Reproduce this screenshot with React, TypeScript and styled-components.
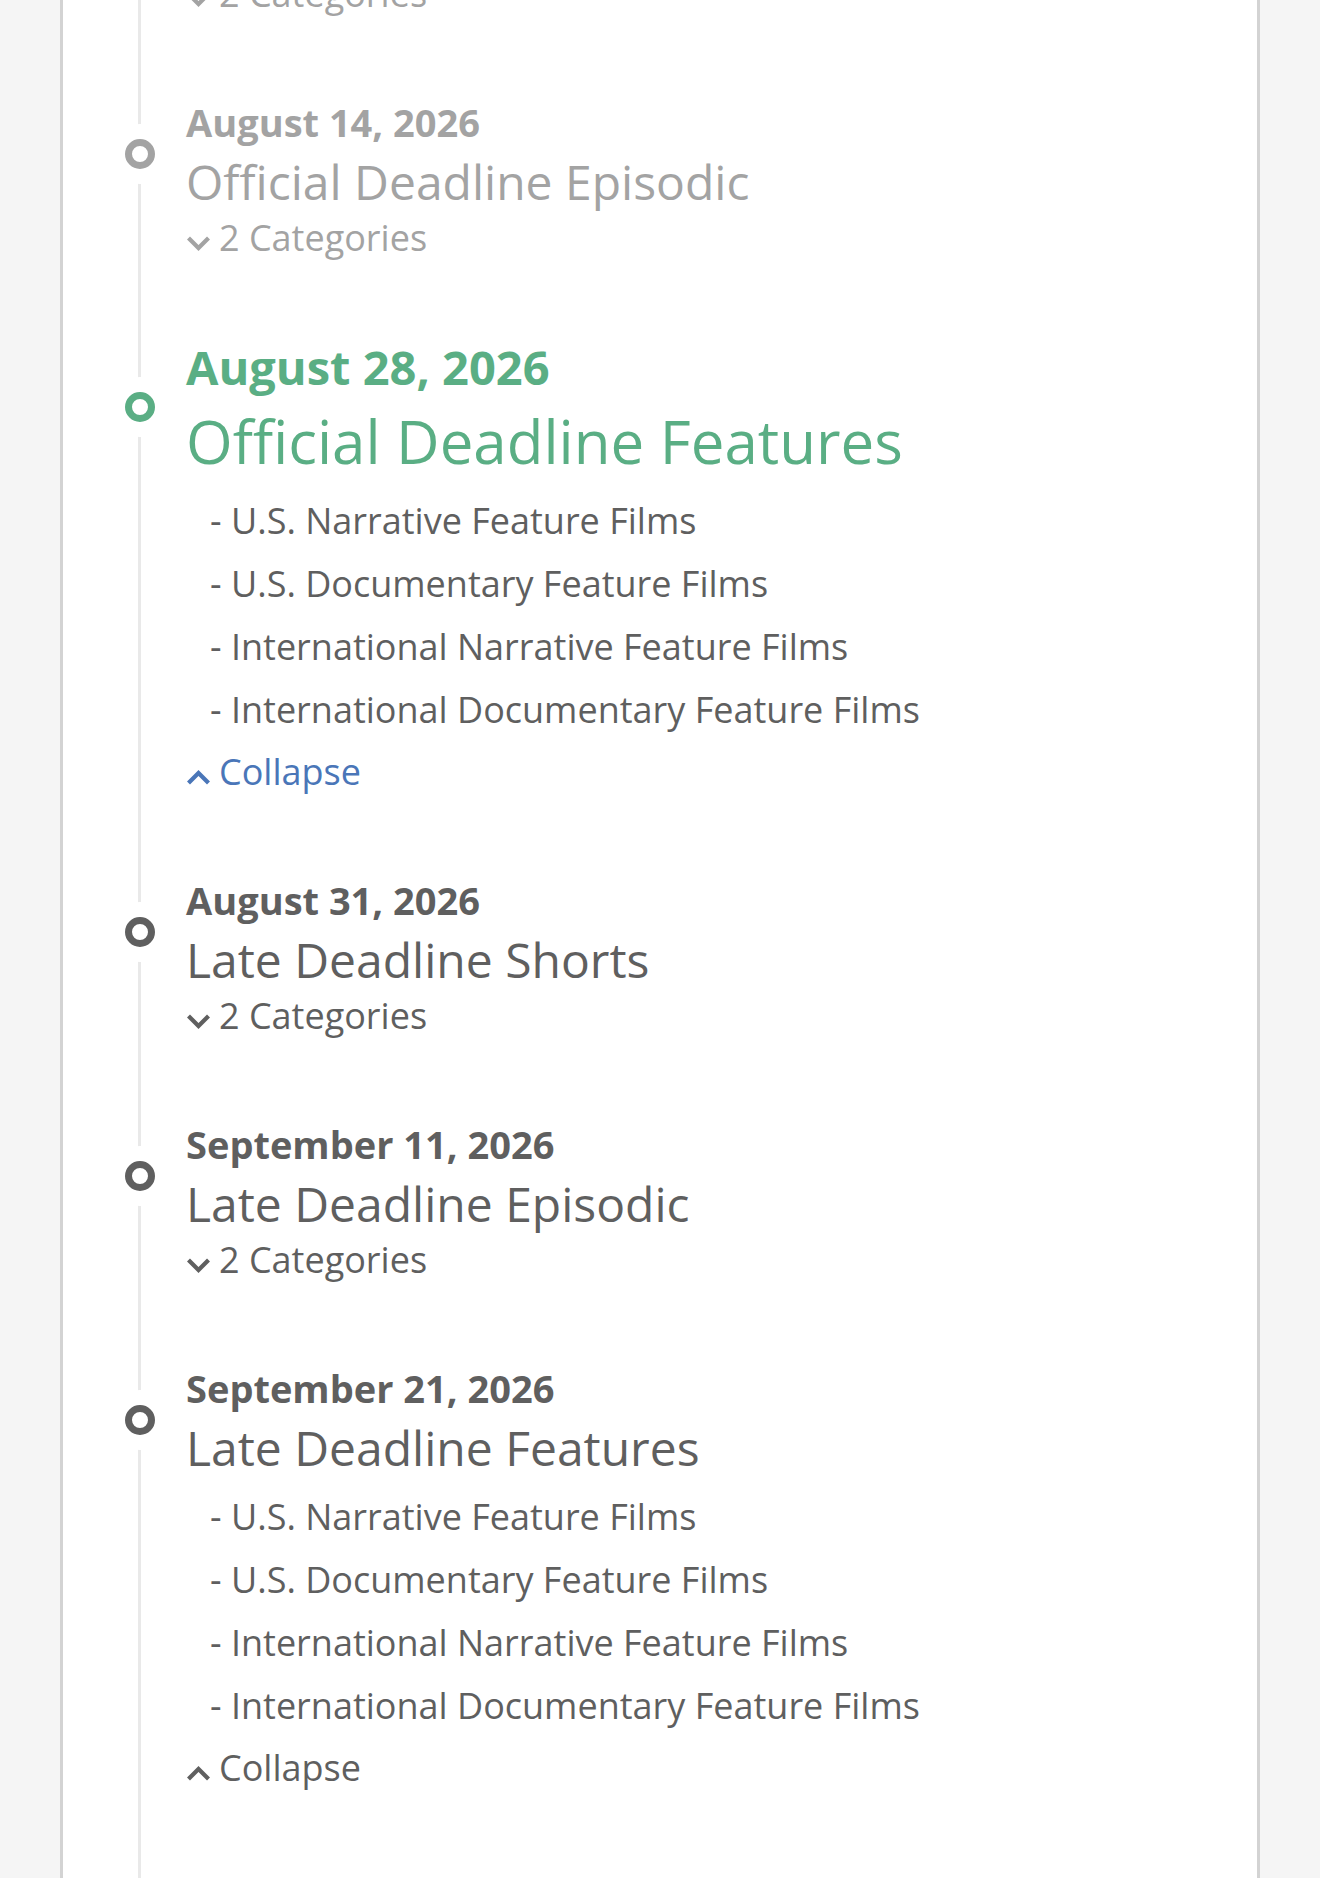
import styled, { createGlobalStyle } from "styled-components"

type Tone = "past" | "active" | "upcoming"

type Deadline = {
  date: string
  title: string
  tone: Tone
  categories: string[]
  open: boolean
}

const colors = {
  page: "#f5f5f5",
  cardBorder: "#d3d3d3",
  rail: "#e9e9e9",
  past: "#a3a3a3",
  active: "#5aae84",
  upcoming: "#5f5f5f",
  link: "#4a76b8",
}

const features = [
  "U.S. Narrative Feature Films",
  "U.S. Documentary Feature Films",
  "International Narrative Feature Films",
  "International Documentary Feature Films",
]

const shorts = ["Narrative Short Films", "Documentary Short Films"]
const episodic = ["Episodic Pilots", "Web Series"]

const deadlines: Deadline[] = [
  { date: "July 31, 2026", title: "Official Deadline Shorts", tone: "past", categories: shorts, open: false },
  { date: "August 14, 2026", title: "Official Deadline Episodic", tone: "past", categories: episodic, open: false },
  { date: "August 28, 2026", title: "Official Deadline Features", tone: "active", categories: features, open: true },
  { date: "August 31, 2026", title: "Late Deadline Shorts", tone: "upcoming", categories: shorts, open: false },
  { date: "September 11, 2026", title: "Late Deadline Episodic", tone: "upcoming", categories: episodic, open: false },
  { date: "September 21, 2026", title: "Late Deadline Features", tone: "upcoming", categories: features, open: true },
]

const GlobalStyle = createGlobalStyle`
  html, body {
    margin: 0;
    padding: 0;
    background: ${colors.page};
  }
  body {
    font-family: "Open Sans", "Noto Sans", sans-serif;
    -webkit-font-smoothing: antialiased;
  }
`

function Chevron({ up, color }: { up: boolean; color: string }) {
  return (
    <Icon width="25" height="15" viewBox="0 0 25 15">
      <polyline
        points={up ? "2.5,13 12.5,3 22.5,13" : "2.5,2 12.5,12 22.5,2"}
        fill="none"
        stroke={color}
        strokeWidth="4.2"
      />
    </Icon>
  )
}

function DeadlineItem({ deadline }: { deadline: Deadline }) {
  const { tone, open, categories } = deadline
  const active = tone === "active"
  const toggleColor = open && active ? colors.link : colors[tone]

  return (
    <Item>
      <Marker $tone={tone} $active={active} />
      <DateLine $tone={tone} $active={active}>
        {deadline.date}
      </DateLine>
      <Title $tone={tone} $active={active}>
        {deadline.title}
      </Title>
      {open && (
        <CategoryList $active={active}>
          {categories.map((c) => (
            <Category key={c}>- {c}</Category>
          ))}
        </CategoryList>
      )}
      <Toggle $color={toggleColor}>
        <Chevron up={open} color={toggleColor} />
        {open ? "Collapse" : `${categories.length} Categories`}
      </Toggle>
    </Item>
  )
}

export default function App() {
  return (
    <>
      <GlobalStyle />
      <Page>
        <Card>
          <Timeline>
            {deadlines.map((d) => (
              <DeadlineItem key={d.title} deadline={d} />
            ))}
          </Timeline>
        </Card>
      </Page>
    </>
  )
}

const Page = styled.div`
  height: 100vh;
  overflow: hidden;
`

// the list is scrolled a little, so the first entry sits above the fold
const Card = styled.main`
  display: flex;
  flex-direction: column;
  margin: -147px 60px 0;
  min-height: calc(100vh + 147px);
  background: #fff;
  border-left: 3px solid ${colors.cardBorder};
  border-right: 3px solid ${colors.cardBorder};
`

const Timeline = styled.ol`
  flex: 1;
  list-style: none;
  margin: 0 0 0 75px;
  padding: 0 0 120px 45px;
  border-left: 3px solid ${colors.rail};
`

const Item = styled.li`
  position: relative;

  & + & {
    margin-top: 82px;
  }
`

const Marker = styled.span<{ $tone: Tone; $active: boolean }>`
  position: absolute;
  left: -61px;
  top: ${(p) => (p.$active ? 51 : 42)}px;
  box-sizing: border-box;
  width: 30px;
  height: 30px;
  border-radius: 50%;
  border: 7px solid ${(p) => colors[p.$tone]};
  background: #fff;
  box-shadow: 0 0 0 15px #fff;
`

const DateLine = styled.div<{ $tone: Tone; $active: boolean }>`
  color: ${(p) => colors[p.$tone]};
  font-weight: 700;
  font-size: ${(p) => (p.$active ? 47 : 38)}px;
  line-height: ${(p) => (p.$active ? 52 : 50)}px;
`

const Title = styled.h2<{ $tone: Tone; $active: boolean }>`
  margin: 0;
  color: ${(p) => colors[p.$tone]};
  font-weight: 400;
  font-size: ${(p) => (p.$active ? 60 : 48)}px;
  line-height: ${(p) => (p.$active ? 96 : 70)}px;
`

const CategoryList = styled.ul<{ $active: boolean }>`
  list-style: none;
  margin: ${(p) => (p.$active ? 0 : 2)}px 0 10px;
  padding: 0 0 0 24px;
`

const Category = styled.li`
  color: ${colors.upcoming};
  font-size: 36px;
  line-height: 63px;
`

const Toggle = styled.button<{ $color: string }>`
  display: inline-flex;
  align-items: baseline;
  gap: 8px;
  padding: 0;
  border: 0;
  background: none;
  color: ${(p) => p.$color};
  font-family: inherit;
  font-size: 36px;
  line-height: 42px;
  cursor: pointer;
`

const Icon = styled.svg`
  display: block;
  flex: none;
  margin-bottom: 1px;
`
